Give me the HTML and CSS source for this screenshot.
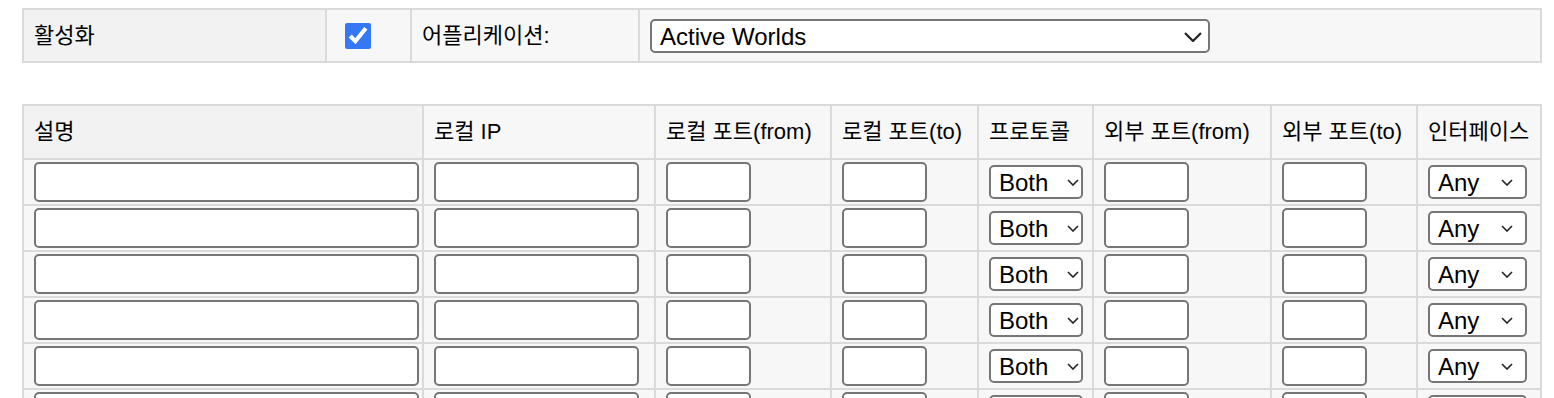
FILE: index.html
```html
<!DOCTYPE html>
<html lang="ko">
<head>
  <meta charset="UTF-8">
  <meta name="viewport" content="width=device-width, initial-scale=1.0">
  <title>포트 포워딩</title>
  <link rel="stylesheet" href="styles.css">
</head>
<body>
  <div class="page">
    <table class="settings">
      <colgroup>
        <col class="c-label"><col class="c-check"><col class="c-app"><col class="c-select">
      </colgroup>
      <tr>
        <td class="label">활성화</td>
        <td><input type="checkbox" class="enable" checked></td>
        <td>어플리케이션:</td>
        <td>
          <span class="sel sel-app">
            <select class="app">
              <option>Active Worlds</option>
            </select>
            <svg class="chev" width="18" height="10" viewBox="0 0 18 10"><polyline points="1,1 9,9 17,1" /></svg>
          </span>
        </td>
      </tr>
    </table>

    <table class="rules">
      <colgroup>
        <col style="width:400px"><col style="width:232px"><col style="width:176px"><col style="width:147px">
        <col style="width:115px"><col style="width:178px"><col style="width:146px"><col style="width:124px">
      </colgroup>
      <thead>
        <tr>
          <th class="label">설명</th>
          <th>로컬 IP</th>
          <th>로컬 포트(from)</th>
          <th>로컬 포트(to)</th>
          <th>프로토콜</th>
          <th>외부 포트(from)</th>
          <th>외부 포트(to)</th>
          <th>인터페이스</th>
        </tr>
      </thead>
      <tbody id="rows"></tbody>
    </table>
  </div>

  <template id="row">
    <tr>
      <td><input type="text" class="desc"></td>
      <td><input type="text" class="ip"></td>
      <td><input type="text" class="port"></td>
      <td><input type="text" class="port"></td>
      <td>
        <span class="sel sel-proto">
          <select class="proto"><option>Both</option><option>TCP</option><option>UDP</option></select>
          <svg class="chev" width="12" height="7" viewBox="0 0 12 7"><polyline points="1,1 6,6 11,1" /></svg>
        </span>
      </td>
      <td><input type="text" class="port"></td>
      <td><input type="text" class="port"></td>
      <td>
        <span class="sel sel-iface">
          <select class="iface"><option>Any</option><option>WAN</option></select>
          <svg class="chev" width="12" height="7" viewBox="0 0 12 7"><polyline points="1,1 6,6 11,1" /></svg>
        </span>
      </td>
    </tr>
  </template>

  <script>
    const body = document.getElementById('rows');
    const tpl = document.getElementById('row');
    for (let i = 0; i < 8; i++) {
      body.appendChild(tpl.content.cloneNode(true));
    }
  </script>
</body>
</html>
```

FILE: styles.css
```css
body {
  margin: 0;
  font-family: 'Liberation Sans', 'Noto Sans CJK KR', sans-serif;
  color: #000;
  background: #fff;
}
.page {
  padding: 8px 22px;
}
table {
  border-collapse: collapse;
  table-layout: fixed;
  width: 1520px;
}
td, th {
  border: 2px solid #dadada;
  background: #f7f7f7;
  text-align: left;
  font-weight: normal;
  font-size: 22px;
  line-height: 24px;
  padding: 0 10px;
  white-space: nowrap;
}
.label {
  background: #f2f2f2 !important;
}

/* top table */
.c-label { width: 303px; }
.c-check { width: 85px; }
.c-app { width: 228px; }
.settings td {
  padding: 9px 10px 8px;
}
.enable {
  width: 26px;
  height: 26px;
  margin: 0 0 0 8px;
  display: block;
  accent-color: #3478f6;
}

/* rule table */
.rules {
  margin-top: 41px;
}
.rules th {
  padding: 14px 10px;
}
.rules td {
  padding: 2px 10px;
}
input[type="text"] {
  display: block;
  box-sizing: border-box;
  height: 40px;
  border: 2px solid #767676;
  border-radius: 5px;
  background: #fff;
  font: 24px 'Liberation Sans', sans-serif;
  padding: 0 8px;
  outline: none;
}
.desc { width: 385px; }
.ip { width: 205px; }
.port { width: 85px; }

.sel {
  position: relative;
  display: inline-block;
  vertical-align: middle;
}
select {
  appearance: none;
  -webkit-appearance: none;
  box-sizing: border-box;
  height: 34px;
  border: 2px solid #767676;
  border-radius: 5px;
  background: #fff;
  color: #000;
  font: 24px 'Liberation Sans', sans-serif;
  padding: 0 0 0 8px;
  display: block;
}
.app { width: 560px; }
.proto { width: 94px; }
.iface { width: 99px; }
.chev {
  position: absolute;
  top: 50%;
  pointer-events: none;
}
.chev polyline {
  fill: none;
  stroke: #222;
  stroke-width: 1.6;
}
.sel-app .chev {
  right: 8px;
  margin-top: -4px;
}
.sel-app .chev polyline {
  stroke-width: 2.2;
}
.sel-proto .chev {
  right: 4px;
  margin-top: -3px;
}
.sel-iface .chev {
  right: 14px;
  margin-top: -3px;
}
```
